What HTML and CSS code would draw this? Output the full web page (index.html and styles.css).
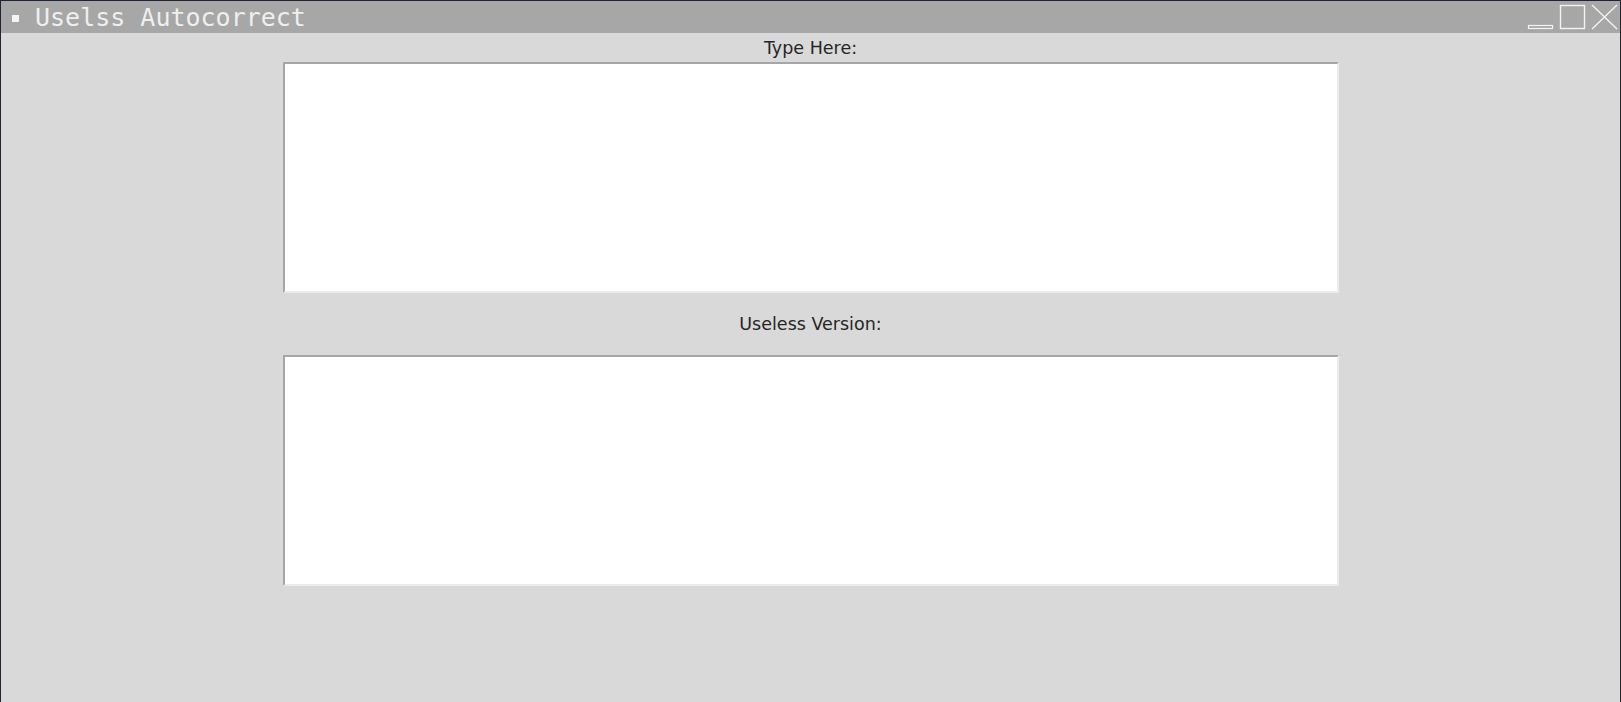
FILE: index.html
```html
<!DOCTYPE html>
<html>
<head>
<meta charset="utf-8">
<link rel="stylesheet" href="styles.css">
</head>
<body>
<div class="window">
  <div class="titlebar">
    <span class="app-icon"></span>
    <span class="title">Uselss Autocorrect</span>
    <div class="controls">
      <svg class="ctl" width="27" height="30" viewBox="0 0 27 30"><rect x="1.5" y="24.5" width="24" height="3" fill="none" stroke="#f4f4f4" stroke-width="1.2"/></svg>
      <svg class="ctl" width="27" height="30" viewBox="0 0 27 30"><rect x="1.5" y="4.5" width="24" height="23" fill="none" stroke="#f4f4f4" stroke-width="1.4"/></svg>
      <svg class="ctl" width="28" height="30" viewBox="0 0 28 30"><path d="M1 4 L26 28 M26 4 L1 28" stroke="#f4f4f4" stroke-width="1.3" fill="none"/></svg>
    </div>
  </div>
  <div class="content">
    <div class="label label-first">Type Here:</div>
    <div class="textbox"></div>
    <div class="label label-second">Useless Version:</div>
    <div class="textbox"></div>
  </div>
</div>
</body>
</html>
```

FILE: styles.css
```css
html, body {
  margin: 0;
  padding: 0;
  width: 1621px;
  height: 702px;
  overflow: hidden;
  background: #d9d9d9;
}

.window {
  box-sizing: border-box;
  width: 1621px;
  height: 702px;
  border-top: 1px solid #1e2433;
  border-left: 1px solid #1e2433;
  border-right: 1px solid #1e2433;
  background: #d9d9d9;
  display: flex;
  flex-direction: column;
}

.titlebar {
  height: 32px;
  background: #a7a7a7;
  display: flex;
  align-items: center;
}

.app-icon {
  width: 7px;
  height: 7px;
  background: #f4f4f4;
  margin-left: 11px;
  margin-top: 2px;
}

.title {
  margin-left: 16px;
  padding-top: 2px;
  font-family: "DejaVu Sans Mono", monospace;
  font-size: 25px;
  line-height: 30px;
  color: #efefef;
}

.controls {
  margin-left: auto;
  display: flex;
  align-items: flex-start;
  height: 32px;
  gap: 5px;
  padding-right: 1px;
}

.ctl {
  display: block;
}

.content {
  display: flex;
  flex-direction: column;
  align-items: center;
}

.label {
  font-family: "DejaVu Sans", sans-serif;
  font-size: 17.5px;
  color: #262626;
  text-align: center;
}

.label-first {
  box-sizing: border-box;
  height: 29px;
  padding-top: 1px;
  line-height: 28px;
}

.label-second {
  height: 62px;
  line-height: 62px;
}

.textbox {
  box-sizing: border-box;
  width: 1056px;
  height: 231px;
  background: #ffffff;
  border-top: 2px solid #a6a6a6;
  border-left: 2px solid #a6a6a6;
  border-right: 2px solid #ebebeb;
  border-bottom: 2px solid #ebebeb;
}
```
